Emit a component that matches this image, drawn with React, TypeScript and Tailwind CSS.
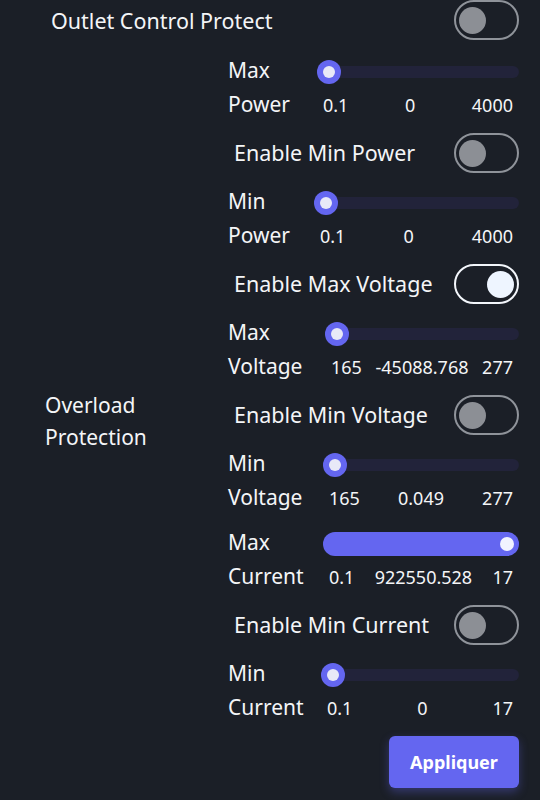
import React from 'react';

type SliderRowProps = {
  top: string;
  bottom: string;
  labelWidth: string;
  min: string;
  value: string;
  max: string;
  full?: boolean;
};

const Toggle = ({ on }: { on: boolean }) => (
  <div
    className={
      'flex h-10 w-[65px] shrink-0 items-center rounded-full border-2 px-[3px] ' +
      (on ? 'justify-end border-[#f3f6fb]' : 'justify-start border-[#8f939a]')
    }
  >
    <div className={'h-[27px] w-[27px] rounded-full ' + (on ? 'bg-[#eef5ff]' : 'bg-[#8c8f95]')} />
  </div>
);

const SliderRow = ({ top, bottom, labelWidth, min, value, max, full }: SliderRowProps) => (
  <div className="flex">
    <div className={'shrink-0 text-[21px] ' + labelWidth}>
      <div className="leading-[33px]">{top}</div>
      <div className="leading-[34px]">{bottom}</div>
    </div>
    <div className="flex flex-1 flex-col">
      <div className="flex h-[33px] items-center pt-[3px]">
        {full ? (
          <div className="flex h-6 w-full items-center justify-end rounded-full bg-[#6466f0] pr-[5px]">
            <div className="h-[14px] w-[14px] rounded-full bg-[#f1f3ff]" />
          </div>
        ) : (
          <div className="relative flex h-3 w-full items-center rounded-full bg-[#22233a]">
            <div className="absolute left-0 flex h-6 w-6 items-center justify-center rounded-full bg-[#6466f0]">
              <div className="h-3 w-3 rounded-full bg-[#e8e9f7]" />
            </div>
          </div>
        )}
      </div>
      <div className="flex h-[34px] items-center justify-between px-[6px] pt-[3px] text-[18px]">
        <span>{min}</span>
        <span>{value}</span>
        <span>{max}</span>
      </div>
    </div>
  </div>
);

const ToggleRow = ({ label, on }: { label: string; on: boolean }) => (
  <div className="flex h-10 items-center justify-between">
    <span className="pl-[6px] text-[21.5px]">{label}</span>
    <Toggle on={on} />
  </div>
);

export default function App() {
  return (
    <div
      className="flex min-h-[800px] w-[540px] flex-col gap-3 bg-[#1b1f27] pr-[21px] text-[#f4f5f7]"
      style={{ fontFamily: '"Noto Sans", "Open Sans", sans-serif' }}
    >
      <div className="flex h-10 items-center justify-between pl-[51px]">
        <span className="pt-[2px] text-[21.5px]">Outlet Control Protect</span>
        <Toggle on={false} />
      </div>

      <div className="mt-[2px] flex items-center">
        <div className="w-[228px] shrink-0 pl-[45px] text-[21px] leading-[32px]">
          <div>Overload</div>
          <div>Protection</div>
        </div>
        <div className="flex flex-1 flex-col gap-3">
          <SliderRow top="Max" bottom="Power" labelWidth="w-[89px]" min="0.1" value="0" max="4000" />
          <ToggleRow label="Enable Min Power" on={false} />
          <SliderRow top="Min" bottom="Power" labelWidth="w-[86px]" min="0.1" value="0" max="4000" />
          <ToggleRow label="Enable Max Voltage" on={true} />
          <SliderRow top="Max" bottom="Voltage" labelWidth="w-[97px]" min="165" value="-45088.768" max="277" />
          <ToggleRow label="Enable Min Voltage" on={false} />
          <SliderRow top="Min" bottom="Voltage" labelWidth="w-[95px]" min="165" value="0.049" max="277" />
          <SliderRow top="Max" bottom="Current" labelWidth="w-[95px]" min="0.1" value="922550.528" max="17" full />
          <ToggleRow label="Enable Min Current" on={false} />
          <SliderRow top="Min" bottom="Current" labelWidth="w-[93px]" min="0.1" value="0" max="17" />
          <div className="flex justify-end">
            <button className="h-[52px] w-[130px] rounded-md bg-[#6466f0] text-[18px] font-bold text-white shadow-[0_4px_10px_rgba(99,102,241,0.35)]">
              Appliquer
            </button>
          </div>
        </div>
      </div>
    </div>
  );
}
